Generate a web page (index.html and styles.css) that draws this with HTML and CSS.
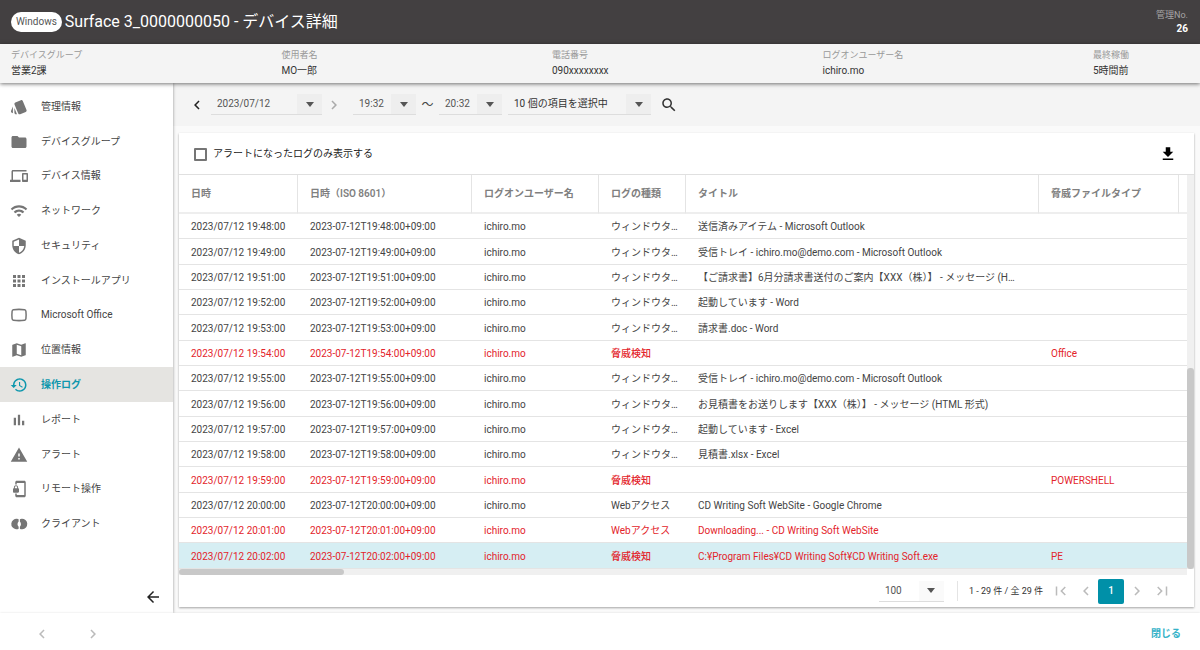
FILE: index.html
```html
<!DOCTYPE html>
<html lang="ja">
<head>
<meta charset="utf-8">
<meta name="viewport" content="width=device-width, initial-scale=1">
<title>Surface 3_0000000050 - デバイス詳細</title>
<link rel="stylesheet" href="styles.css">
</head>
<body>
<header class="titlebar">
  <span class="badge">Windows</span>
  <h1 class="title">Surface 3_0000000050 - デバイス詳細</h1>
  <div class="number"><span class="number-label">管理No.</span><strong>26</strong></div>
</header>
<dl class="summary">
  <div><dt>デバイスグループ</dt><dd>営業2課</dd></div>
  <div><dt>使用者名</dt><dd>MO一郎</dd></div>
  <div><dt>電話番号</dt><dd>090xxxxxxxx</dd></div>
  <div><dt>ログオンユーザー名</dt><dd>ichiro.mo</dd></div>
  <div><dt>最終稼働</dt><dd>5時間前</dd></div>
</dl>
<div class="body">
  <aside class="sidebar">
    <nav class="menu">
      <a href="#" class="item"><svg class="icon" viewBox="0 0 24 24"><path d="M2.53 19.65l1.34.56v-9.03l-2.43 5.86c-.41 1.02.08 2.19 1.09 2.61zm19.5-3.7L17.07 3.98c-.31-.75-1.04-1.21-1.81-1.23-.26 0-.53.04-.79.15L7.1 5.95c-.75.31-1.21 1.03-1.23 1.8-.01.27.04.54.15.8l4.96 11.97c.31.76 1.05 1.22 1.83 1.23.26 0 .52-.05.77-.15l7.36-3.05c1.02-.42 1.51-1.59 1.09-2.6zM5.88 19.75c0 1.1.9 2 2 2h1.45l-3.45-8.34v6.34z"/></svg>管理情報</a>
      <a href="#" class="item"><svg class="icon" viewBox="0 0 24 24"><path d="M10 4H4c-1.1 0-2 .9-2 2v12c0 1.1.9 2 2 2h16c1.1 0 2-.9 2-2V8c0-1.1-.9-2-2-2h-8z"/></svg>デバイスグループ</a>
      <a href="#" class="item"><svg class="icon" viewBox="0 0 24 24"><path d="M4 6h18V4H4c-1.100 0-2 .9-2 2v11H0v3h14v-3H4V6zm19 2h-6c-.55 0-1 .45-1 1v10c0 .55.45 1 1 1h6c.55 0 1-.45 1-1V9c0-.55-.45-1-1-1zm-1 9h-4v-7h4v7z"/></svg>デバイス情報</a>
      <a href="#" class="item"><svg class="icon" viewBox="0 0 24 24"><path d="M1 9l2 2c4.970-4.970 13.030-4.970 18 0l2-2C16.930 2.930 7.080 2.930 1 9zm8 8l3 3 3-3c-1.650-1.660-4.340-1.660-6 0zm-4-4l2 2c2.760-2.760 7.240-2.760 10 0l2-2C15.140 9.140 8.870 9.140 5 13z"/></svg>ネットワーク</a>
      <a href="#" class="item"><svg class="icon" viewBox="0 0 24 24"><path d="M12 1L3 5v6c0 5.550 3.840 10.740 9 12 5.160-1.260 9-6.450 9-12V5l-9-4zm0 10.990h7c-.53 4.120-3.280 7.790-7 8.940V12H5V6.300l7-3.110v8.800z"/></svg>セキュリティ</a>
      <a href="#" class="item"><svg class="icon" viewBox="0 0 24 24"><path d="M4 4h4v4H4zM10 4h4v4h-4zM16 4h4v4h-4zM4 10h4v4H4zM10 10h4v4h-4zM16 10h4v4h-4zM4 16h4v4H4zM10 16h4v4h-4zM16 16h4v4h-4z"/></svg>インストールアプリ</a>
      <a href="#" class="item"><svg class="icon line" viewBox="0 0 24 24"><path d="M4.500 5Q12 4 19.500 5Q21 5.200 21.200 7Q21.800 12 21.200 17Q21 18.800 19.500 19Q12 20 4.500 19Q3 18.800 2.800 17Q2.200 12 2.800 7Q3 5.200 4.500 5z"/></svg>Microsoft Office</a>
      <a href="#" class="item"><svg class="icon" viewBox="0 0 24 24"><path d="M20.500 3l-.16.030L15 5.100 9 3 3.360 4.900c-.21.070-.36.250-.36.480V20.500c0 .28.220.5.500.5l.16-.03L9 18.900l6 2.100 5.640-1.900c.21-.07.36-.25.36-.48V3.500c0-.28-.22-.5-.5-.5zM15 19l-6-2.110V5l6 2.110V19z"/></svg>位置情報</a>
      <a href="#" class="item active" aria-current="page"><svg class="icon" viewBox="0 0 24 24"><path d="M13 3c-4.970 0-9 4.030-9 9H1l3.890 3.890.07.14L9 12H6c0-3.870 3.130-7 7-7s7 3.130 7 7-3.130 7-7 7c-1.930 0-3.680-.79-4.940-2.060l-1.420 1.420C8.270 19.990 10.510 21 13 21c4.970 0 9-4.030 9-9s-4.030-9-9-9zm-1 5v5l4.280 2.540.72-1.210-3.500-2.080V8H12z"/></svg>操作ログ</a>
      <a href="#" class="item"><svg class="icon" viewBox="0 0 24 24"><path d="M5 9h3v10H5zM10.500 5h3v14h-3zM16 13h3v6h-3z"/></svg>レポート</a>
      <a href="#" class="item"><svg class="icon" viewBox="0 0 24 24"><path d="M1 21h22L12 2 1 21zm12-3h-2v-2h2v2zm0-4h-2v-4h2v4z"/></svg>アラート</a>
      <a href="#" class="item"><svg class="icon" viewBox="0 0 24 24"><path d="M19 1H9c-1.100 0-2 .9-2 2v3h2V4h10v16H9v-2H7v3c0 1.100.9 2 2 2h10c1.100 0 2-.9 2-2V3c0-1.100-.9-2-2-2zm-8.200 10V9.500C10.800 8.100 9.400 7 8 7S5.200 8.100 5.200 9.500V11c-.6 0-1.200.6-1.200 1.200v3.500c0 .7.6 1.300 1.200 1.300h5.500c.7 0 1.300-.6 1.300-1.200v-3.500c0-.7-.6-1.300-1.200-1.300zm-1.300 0h-3V9.500c0-.8.7-1.300 1.500-1.300s1.500.5 1.500 1.300V11z"/></svg>リモート操作</a>
      <a href="#" class="item"><svg class="icon" viewBox="0 0 24 24"><path d="M9.500 5A7 7 0 0 0 8 19Q10 19.200 11.500 18.300V15.500Q8.500 12 11.500 8.500V5.700Q10.500 5 9.500 5zM15.500 5A7 7 0 0 1 16.500 19Q14.500 19.200 13.200 18.300V15.500Q16 12 13.200 8.500V5.700Q14.300 5 15.500 5z"/></svg>クライアント</a>
    </nav>
    <div class="collapse"><button type="button" aria-label="メニューを折りたたむ"><svg class="icon" viewBox="0 0 24 24"><path d="M20 11H7.830l5.590-5.590L12 4l-8 8 8 8 1.410-1.410L7.830 13H20v-2z"/></svg></button></div>
  </aside>
  <main class="main">
    <form class="filters">
      <button type="button" class="step dark" aria-label="前の日"><svg class="icon" viewBox="0 0 24 24"><path d="M15.410 7.410L14 6l-6 6 6 6 1.410-1.410L10.830 12z"/></svg></button>
      <span class="picker picker-date"><select aria-label="日付"><option>2023/07/12</option></select><span class="caret"></span></span>
      <button type="button" class="step" aria-label="次の日"><svg class="icon" viewBox="0 0 24 24"><path d="M10 6L8.590 7.410 13.170 12l-4.580 4.590L10 18l6-6z"/></svg></button>
      <span class="picker picker-time from"><select aria-label="開始時刻"><option>19:32</option></select><span class="caret"></span></span>
      <span class="tilde">～</span>
      <span class="picker picker-time"><select aria-label="終了時刻"><option>20:32</option></select><span class="caret"></span></span>
      <span class="picker picker-items"><select aria-label="項目"><option>10 個の項目を選択中</option></select><span class="caret"></span></span>
      <button type="button" class="search" aria-label="検索"><svg class="icon" viewBox="0 0 24 24"><path d="M15.500 14h-.79l-.28-.27C15.410 12.590 16 11.110 16 9.500 16 5.910 13.090 3 9.500 3S3 5.910 3 9.500 5.910 16 9.500 16c1.610 0 3.090-.59 4.230-1.570l.27.28v.79l5 4.990L20.490 19l-4.990-5zm-6 0C7.010 14 5 11.990 5 9.500S7.010 5 9.500 5 14 7.010 14 9.500 11.990 14 9.500 14z"/></svg></button>
    </form>
    <section class="card">
      <div class="card-head">
        <label class="check"><input type="checkbox">アラートになったログのみ表示する</label>
        <button type="button" class="download" aria-label="ダウンロード"><svg class="icon" viewBox="0 0 24 24"><path d="M19 9h-4V3H9v6H5l7 7 7-7zM5 18v2h14v-2H5z"/></svg></button>
      </div>
      <div class="grid">
        <div class="grid-view">
          <table class="log">
            <colgroup><col class="c-date"><col class="c-iso"><col class="c-user"><col class="c-kind"><col><col class="c-type"><col class="c-rest"></colgroup>
            <thead><tr><th>日時</th><th>日時（ISO 8601）</th><th>ログオンユーザー名</th><th>ログの種類</th><th>タイトル</th><th>脅威ファイルタイプ</th><th></th></tr></thead>
            <tbody>
              <tr><td>2023/07/12 19:48:00</td><td>2023-07-12T19:48:00+09:00</td><td>ichiro.mo</td><td>ウィンドウタ…</td><td>送信済みアイテム - Microsoft Outlook</td><td></td><td></td></tr>
              <tr><td>2023/07/12 19:49:00</td><td>2023-07-12T19:49:00+09:00</td><td>ichiro.mo</td><td>ウィンドウタ…</td><td>受信トレイ - ichiro.mo@demo.com - Microsoft Outlook</td><td></td><td></td></tr>
              <tr><td>2023/07/12 19:51:00</td><td>2023-07-12T19:51:00+09:00</td><td>ichiro.mo</td><td>ウィンドウタ…</td><td>【ご請求書】6月分請求書送付のご案内【XXX（株）】 - メッセージ (H…</td><td></td><td></td></tr>
              <tr><td>2023/07/12 19:52:00</td><td>2023-07-12T19:52:00+09:00</td><td>ichiro.mo</td><td>ウィンドウタ…</td><td>起動しています - Word</td><td></td><td></td></tr>
              <tr><td>2023/07/12 19:53:00</td><td>2023-07-12T19:53:00+09:00</td><td>ichiro.mo</td><td>ウィンドウタ…</td><td>請求書.doc - Word</td><td></td><td></td></tr>
              <tr class="alert"><td>2023/07/12 19:54:00</td><td>2023-07-12T19:54:00+09:00</td><td>ichiro.mo</td><td class="threat">脅威検知</td><td></td><td>Office</td><td></td></tr>
              <tr><td>2023/07/12 19:55:00</td><td>2023-07-12T19:55:00+09:00</td><td>ichiro.mo</td><td>ウィンドウタ…</td><td>受信トレイ - ichiro.mo@demo.com - Microsoft Outlook</td><td></td><td></td></tr>
              <tr><td>2023/07/12 19:56:00</td><td>2023-07-12T19:56:00+09:00</td><td>ichiro.mo</td><td>ウィンドウタ…</td><td>お見積書をお送りします【XXX（株）】 - メッセージ (HTML 形式)</td><td></td><td></td></tr>
              <tr><td>2023/07/12 19:57:00</td><td>2023-07-12T19:57:00+09:00</td><td>ichiro.mo</td><td>ウィンドウタ…</td><td>起動しています - Excel</td><td></td><td></td></tr>
              <tr><td>2023/07/12 19:58:00</td><td>2023-07-12T19:58:00+09:00</td><td>ichiro.mo</td><td>ウィンドウタ…</td><td>見積書.xlsx - Excel</td><td></td><td></td></tr>
              <tr class="alert"><td>2023/07/12 19:59:00</td><td>2023-07-12T19:59:00+09:00</td><td>ichiro.mo</td><td class="threat">脅威検知</td><td></td><td>POWERSHELL</td><td></td></tr>
              <tr><td>2023/07/12 20:00:00</td><td>2023-07-12T20:00:00+09:00</td><td>ichiro.mo</td><td>Webアクセス</td><td>CD Writing Soft WebSite - Google Chrome</td><td></td><td></td></tr>
              <tr class="alert"><td>2023/07/12 20:01:00</td><td>2023-07-12T20:01:00+09:00</td><td>ichiro.mo</td><td>Webアクセス</td><td>Downloading... - CD Writing Soft WebSite</td><td></td><td></td></tr>
              <tr class="alert selected"><td>2023/07/12 20:02:00</td><td>2023-07-12T20:02:00+09:00</td><td>ichiro.mo</td><td class="threat">脅威検知</td><td>C:¥Program Files¥CD Writing Soft¥CD Writing Soft.exe</td><td>PE</td><td></td></tr>
            </tbody>
          </table>
        </div>
        <div class="track-y"><div class="thumb-y"></div></div>
        <div class="track-x"><div class="thumb-x"></div></div>
      </div>
      <div class="pager">
        <span class="picker picker-size"><select aria-label="表示件数"><option>100</option></select><span class="caret"></span></span>
        <span class="range">1 - 29 件 / 全 29 件</span>
        <button type="button" class="page" aria-label="最初のページ"><svg class="icon" viewBox="0 0 24 24"><path d="M18.410 16.590L13.820 12l4.590-4.590L17 6l-6 6 6 6zM5 6h2v12H5z"/></svg></button>
        <button type="button" class="page" aria-label="前のページ"><svg class="icon" viewBox="0 0 24 24"><path d="M15.410 7.410L14 6l-6 6 6 6 1.410-1.410L10.830 12z"/></svg></button>
        <button type="button" class="page current">1</button>
        <button type="button" class="page" aria-label="次のページ"><svg class="icon" viewBox="0 0 24 24"><path d="M10 6L8.590 7.410 13.170 12l-4.580 4.590L10 18l6-6z"/></svg></button>
        <button type="button" class="page" aria-label="最後のページ"><svg class="icon" viewBox="0 0 24 24"><path d="M5.590 7.410L10.180 12l-4.590 4.590L7 18l6-6-6-6zM17 6h2v12h-2z"/></svg></button>
      </div>
    </section>
  </main>
</div>
<footer class="footer">
  <button type="button" class="page" aria-label="前のデバイス"><svg class="icon" viewBox="0 0 24 24"><path d="M15.410 7.410L14 6l-6 6 6 6 1.410-1.410L10.830 12z"/></svg></button>
  <button type="button" class="page" aria-label="次のデバイス"><svg class="icon" viewBox="0 0 24 24"><path d="M10 6L8.590 7.410 13.170 12l-4.580 4.590L10 18l6-6z"/></svg></button>
  <button type="button" class="close">閉じる</button>
</footer>
</body>
</html>
```

FILE: styles.css
```css
* { box-sizing: border-box; }
body {
  margin: 0;
  height: 100vh;
  display: flex;
  flex-direction: column;
  overflow: hidden;
  background: #fff;
  color: #444;
  font: 10px/14px Roboto, "Noto Sans CJK JP", sans-serif;
}
button, select, input { font: inherit; color: inherit; margin: 0; }
button { background: none; border: 0; padding: 0; cursor: pointer; display: flex; align-items: center; justify-content: center; }
.icon { width: 18px; height: 18px; fill: currentColor; flex: none; display: block; }
.icon.line { fill: none; stroke: currentColor; stroke-width: 2; }

.titlebar { flex: none; height: 44px; display: flex; align-items: center; padding: 0 12px 0 11px; background: #434041; color: #fff; }
.badge { background: #fff; color: #555; border-radius: 10px; line-height: 20px; padding: 0 5px; margin-right: 3px; }
.title { margin: 0; font-size: 16px; line-height: 20px; font-weight: 400; }
.number { margin-left: auto; display: flex; flex-direction: column; align-items: flex-end; }
.number-label { font-size: 9px; color: #a6a4a5; }

.summary { flex: none; position: relative; z-index: 2; margin: 0; height: 39px; padding: 4px 0 0 11px; display: grid; grid-template-columns: repeat(4, 1fr) 107px; background: #f4f4f4; box-shadow: 0 1px 4px rgba(0, 0, 0, .55); }
.summary dt { font-size: 9px; line-height: 15px; color: #999; }
.summary dd { margin: 0; line-height: 15px; color: #333; }

.body { flex: 1; min-height: 0; display: flex; }
.sidebar { position: relative; z-index: 1; flex: none; width: 173px; padding-top: 6px; display: flex; flex-direction: column; background: #fff; box-shadow: 0 0 3px rgba(0, 0, 0, .4); }
.menu { flex: 1; display: flex; flex-direction: column; }
.item { flex: 1; display: flex; align-items: center; gap: 13px; padding: 1px 0 0 10px; color: #444; text-decoration: none; }
.item .icon { color: #757575; }
.item.active { background: #e5e4e1; color: #0f97ad; font-weight: 600; }
.item.active .icon { color: #0f97ad; }
.collapse { height: 72px; display: flex; justify-content: flex-end; align-items: flex-end; padding: 0 11px 7px 0; color: #222; }

.main { flex: 1; min-width: 0; display: flex; flex-direction: column; background: #fafafa; }
.filters { flex: none; display: flex; align-items: center; height: 43px; padding-left: 15px; background: #f4f4f4; }
.step { width: 18px; color: #aaa; }
.step.dark { color: #222; margin-right: 5px; }
.picker-date + .step { margin-left: 3px; }
.picker { display: grid; height: 21px; border-bottom: 1px solid #ddd; color: #555; }
.picker select { grid-area: 1 / 1; min-width: 0; appearance: none; border: 0; border-radius: 0; background: none; padding: 0 26px 0 6px; outline: 0; }
.caret { grid-area: 1 / 1; justify-self: end; width: 25px; background: #eee; display: grid; place-items: center; pointer-events: none; }
.caret::after { content: ""; border: 4px solid transparent; border-top: 5px solid #555; border-bottom: 0; }
.picker-date { width: 111px; }
.picker-time { width: 63px; }
.picker-items { width: 143px; margin-left: 6px; color: #333; }
.from { margin-left: 10px; }
.tilde { width: 23px; text-align: center; font-size: 12px; }
.search { margin-left: 9px; color: #333; }

.card { flex: 1; min-height: 0; margin: 7px 6px 6px; display: flex; flex-direction: column; background: #fff; box-shadow: 0 1px 2px rgba(0, 0, 0, .35); }
.card-head { flex: none; height: 42px; display: flex; align-items: center; justify-content: space-between; padding: 1px 17px 0 15px; border-bottom: 1px solid #e0e0e0; color: #222; }
.check { display: flex; align-items: center; gap: 6px; }
.check input { appearance: none; width: 13px; height: 13px; border: 2px solid #757575; border-radius: 1px; }
.download { color: #000; }

.grid { flex: 1; min-height: 0; display: grid; grid-template: 1fr 6px / 1fr 7px; }
.grid-view { overflow: hidden; min-height: 0; }
.log { width: 100%; height: 100%; table-layout: fixed; border-collapse: separate; border-spacing: 0; }
.c-date { width: 119px; }
.c-iso { width: 174px; }
.c-user { width: 127px; }
.c-kind { width: 87px; }
.c-type { width: 140px; }
.c-rest { width: 8px; }
.log th { height: 39px; padding: 0 12px; text-align: left; font-weight: 600; color: #808080; border-right: 1px solid #e4e4e4; border-bottom: 2px solid #eee; white-space: nowrap; }
.log td { padding: 2px 0 0 12px; border-bottom: 1px solid #e4e4e4; overflow: hidden; white-space: nowrap; }
.log th:last-child, .log td:last-child { padding: 0; border-right: 0; }
.alert { color: #e3242b; }
.threat { font-weight: 500; }
.selected td { background: #d6eef3; }
.track-y { background: #f0f0f0; display: flex; align-items: flex-end; }
.thumb-y { width: 100%; height: 51%; background: #c8c8c8; border-radius: 3px; }
.track-x { background: #f0f0f0; }
.thumb-x { width: 165px; height: 6px; background: #c8c8c8; border-radius: 3px; }

.pager { flex: none; height: 32px; display: flex; align-items: center; justify-content: flex-end; padding-right: 20px; }
.picker-size { width: 65px; margin-right: 13px; }
.picker-size .caret { background: #fafafa; }
.range { border-left: 1px solid #e4e4e4; line-height: 20px; padding: 0 5px 0 11px; font-size: 9px; color: #333; }
.page { width: 25px; height: 25px; color: #bbb; }
.page.current { width: 26px; background: #0090a8; color: #fff; border-radius: 2px; font-weight: 500; }

.footer { position: relative; z-index: 2; flex: none; height: 37px; display: flex; align-items: center; gap: 26px; padding: 5px 19px 0 29px; background: #fff; box-shadow: 0 0 2px rgba(0, 0, 0, .12); }
.close { margin-left: auto; color: #35b2c8; font-weight: 700; }
```
